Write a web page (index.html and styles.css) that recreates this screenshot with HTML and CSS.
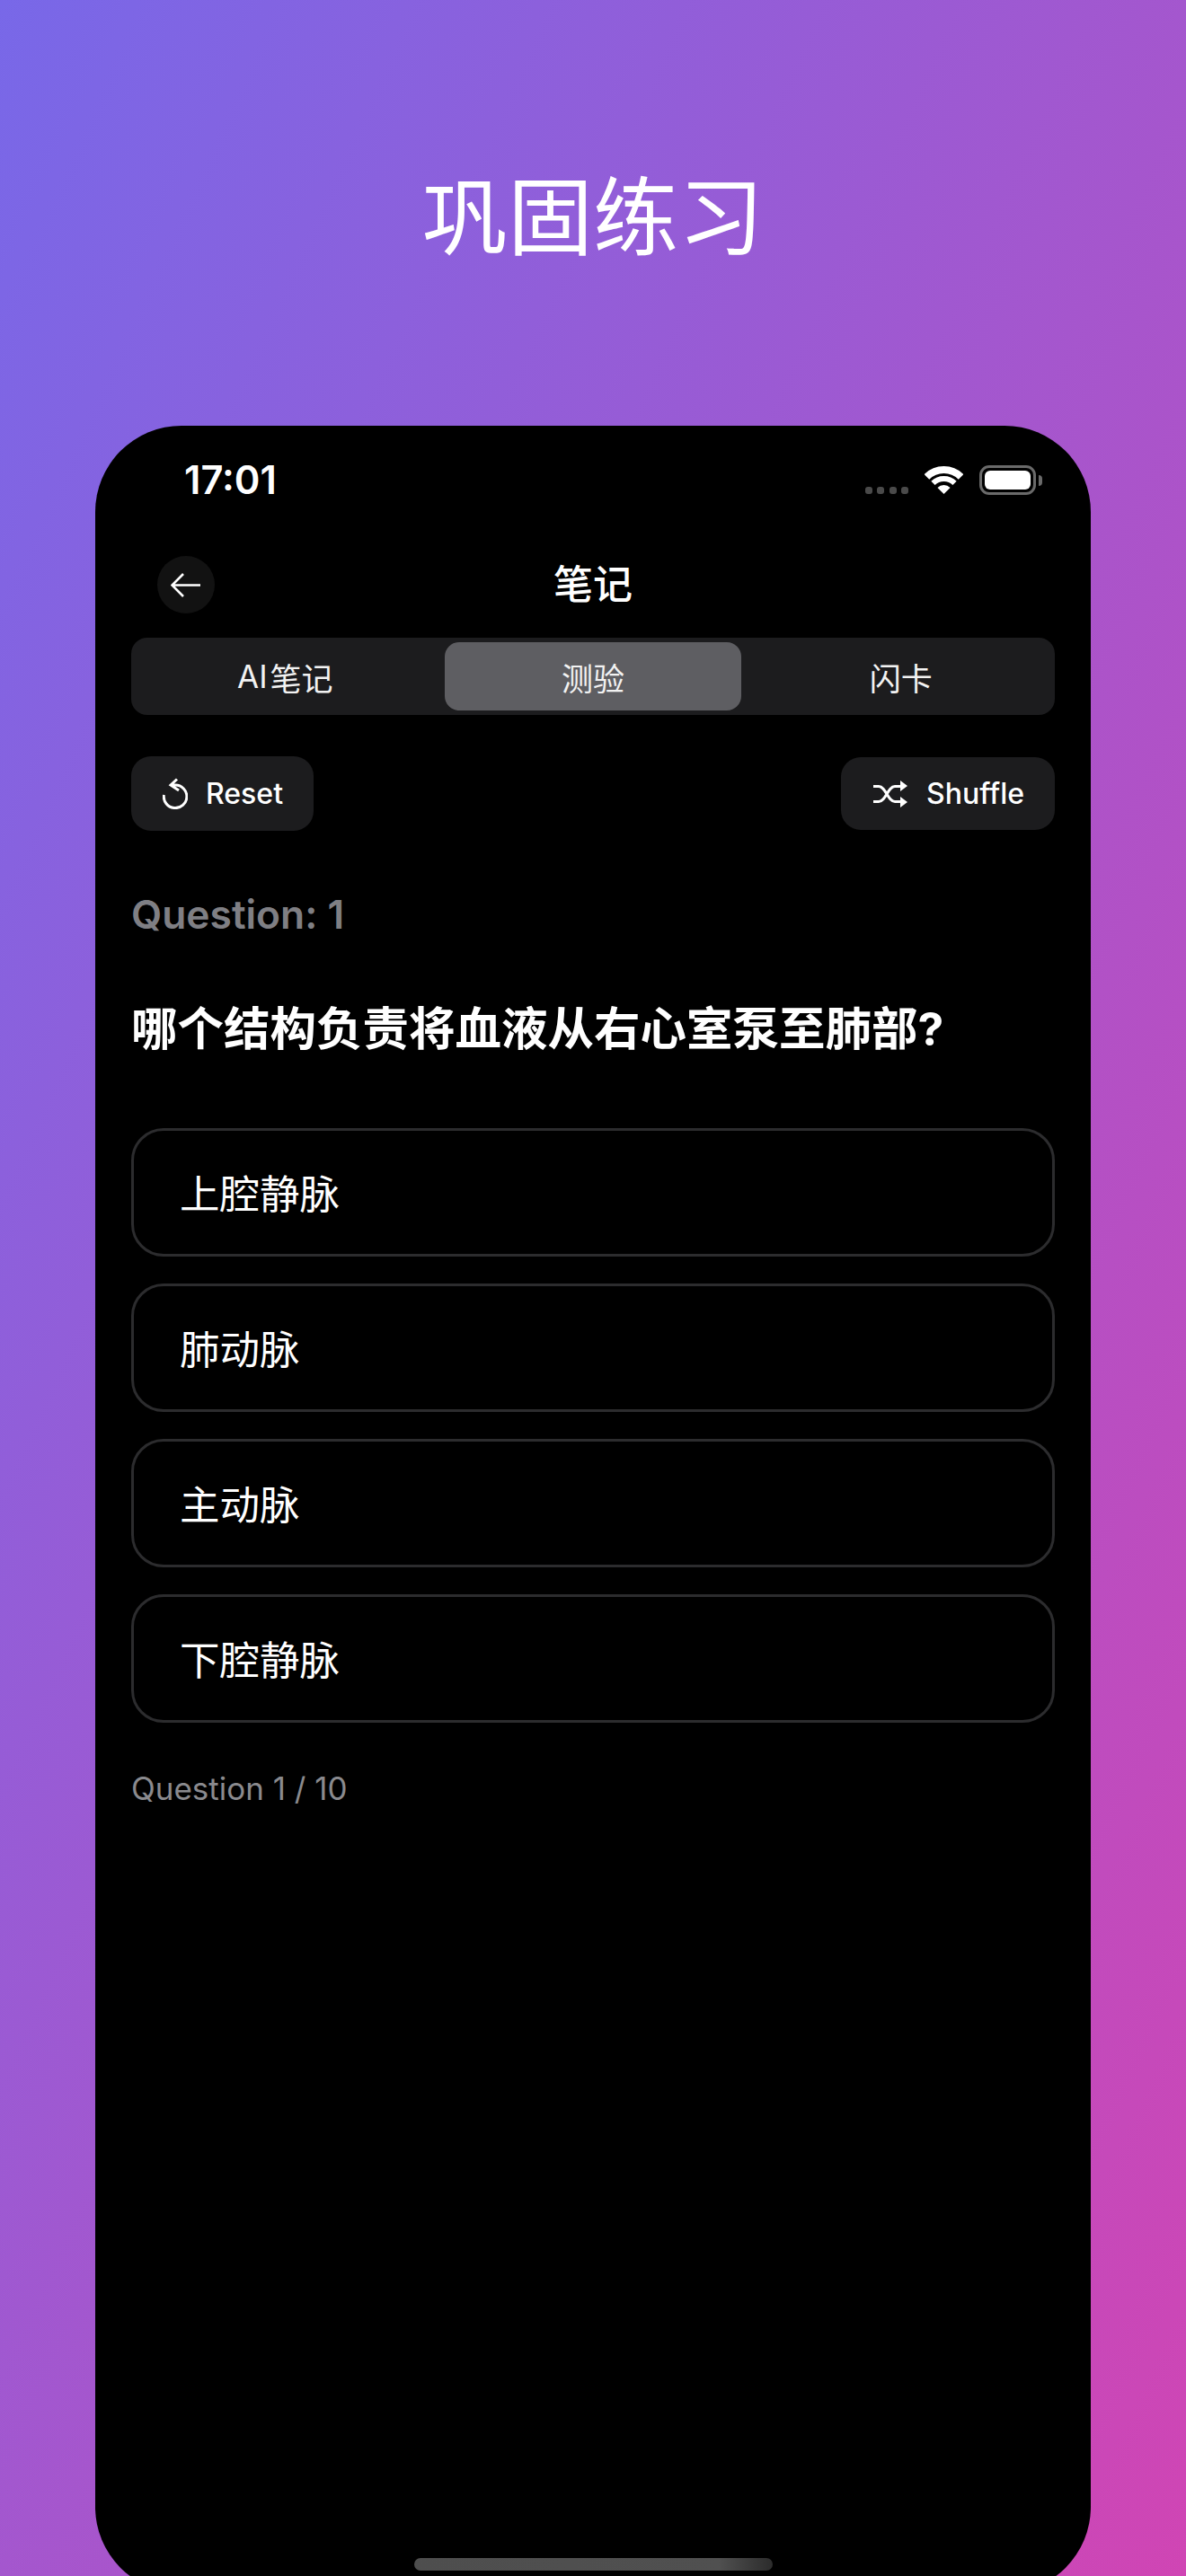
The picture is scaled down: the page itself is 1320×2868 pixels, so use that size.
FILE: index.html
```html
<!DOCTYPE html>
<html lang="zh">
<head>
<meta charset="utf-8">
<title>巩固练习</title>
<link rel="stylesheet" href="styles.css">
</head>
<body>
<h1 class="hero">巩固练习</h1>
<main class="phone">
  <div class="status">
    <span class="time">17:01</span>
    <div class="status-icons">
      <div class="signal"><i></i><i></i><i></i><i></i></div>
      <svg class="wifi" viewBox="0 0 43 33" width="43" height="33"><path d="M21.5 32L14.43 24.93A10 10 0 0 1 28.57 24.93Z" fill="#fff"/><path d="M9.48 19.98A17 17 0 0 1 33.52 19.98" fill="none" stroke="#fff" stroke-width="6"/><path d="M2.41 12.91A27 27 0 0 1 40.59 12.91" fill="none" stroke="#fff" stroke-width="8"/></svg>
      <div class="battery"><div class="battery-fill"></div></div>
      <div class="battery-nub"></div>
    </div>
  </div>
  <header class="nav">
    <button class="back" aria-label="Back"><svg viewBox="0 0 34 27" width="34" height="27"><path d="M33 13.5H2M14 1L1.5 13.5L14 26" fill="none" stroke="#fff" stroke-width="2.6"/></svg></button>
    <div class="nav-title">笔记</div>
  </header>
  <div class="content">
    <div class="tabs">
      <div class="tab"><span class="tab-latin">AI</span>笔记</div>
      <div class="tab tab-active">测验</div>
      <div class="tab">闪卡</div>
    </div>
    <div class="actions">
      <button class="action action-reset">
        <svg viewBox="0 0 28 35" width="28" height="35"><path d="M9 8H14A12.8 12.8 0 1 1 1.4 19M16 1.5L9 8L18 14" fill="none" stroke="#fff" stroke-width="3"/></svg>
        <span>Reset</span>
      </button>
      <button class="action action-shuffle">
        <svg viewBox="0 0 38 30" width="38" height="30"><path d="M0 23.5H6C14 23.5 16 6.5 24 6.5H31M0 6.5H6C14 6.5 16 23.5 24 23.5H31" fill="none" stroke="#fff" stroke-width="3"/><path d="M30 0L38 6L30 12ZM30 18L38 24L30 30Z" fill="#fff"/></svg>
        <span>Shuffle</span>
      </button>
    </div>
    <div class="q-label">Question: 1</div>
    <h2 class="q-text">哪个结构负责将血液从右心室泵至肺部?</h2>
    <div class="options">
      <div class="option">上腔静脉</div>
      <div class="option">肺动脉</div>
      <div class="option">主动脉</div>
      <div class="option">下腔静脉</div>
    </div>
    <div class="progress">Question 1 / 10</div>
  </div>
  <div class="home-bar"></div>
</main>
</body>
</html>
```
FILE: styles.css
```css
* { box-sizing: border-box; }
html, body { margin: 0; padding: 0; }
body {
  width: 1320px;
  height: 2868px;
  overflow: hidden;
  background: linear-gradient(to bottom right, #7868e8, #d045b4);
  font-family: Inter, "Noto Sans CJK SC", sans-serif;
  color: #fff;
}
.hero {
  margin: 0;
  padding-top: 173px;
  height: 474px;
  text-align: center;
  font-size: 95px;
  line-height: 140px;
  font-weight: 400;
}
.phone {
  width: 1108px;
  height: 2413px;
  margin-left: 106px;
  background: #000;
  border-radius: 96px;
  display: flex;
  flex-direction: column;
}
.status {
  display: flex;
  justify-content: space-between;
  align-items: center;
  height: 40px;
  margin-top: 40px;
  padding: 0 54px 0 99px;
}
.time {
  font-size: 43.5px;
  font-weight: 600;
  line-height: 40px;
}
.status-icons { display: flex; align-items: flex-end; height: 33px; }
.signal { display: flex; gap: 5.5px; margin-right: 18px; padding-bottom: 1px; }
.signal i { display: block; width: 8px; height: 8px; border-radius: 3px; background: #4a4a4a; }
.wifi { display: block; margin-right: 18px; }
.battery {
  width: 63px;
  height: 33px;
  border: 3px solid #6a6a6a;
  border-radius: 11px;
  padding: 3px;
}
.battery-fill { width: 100%; height: 100%; background: #fff; border-radius: 6px; }
.battery-nub {
  width: 4px;
  height: 12px;
  margin: 0 0 10px 3px;
  background: #6a6a6a;
  border-radius: 0 4px 4px 0;
}
.nav {
  display: grid;
  grid-template-columns: 64px 1fr 64px;
  align-items: center;
  height: 64px;
  margin-top: 65px;
  padding: 0 69px;
}
.back {
  width: 64px;
  height: 64px;
  padding: 0;
  border: 0;
  border-radius: 50%;
  background: #121212;
  display: flex;
  align-items: center;
  justify-content: center;
}
.nav-title { text-align: center; font-size: 44px; font-weight: 500; line-height: 60px; }
.content { padding: 0 40px; }
.tabs {
  display: grid;
  grid-template-columns: repeat(3, 1fr);
  height: 86px;
  margin-top: 27px;
  background: #1c1c1e;
  border-radius: 18px;
}
.tab {
  display: flex;
  align-items: center;
  justify-content: center;
  margin: 5px 6px;
  border-radius: 16px;
  font-size: 35px;
  color: #f2f2f2;
}
.tab-latin { margin-right: 3px; }
.tab-active { background: #5e5e62; }
.actions {
  display: flex;
  justify-content: space-between;
  align-items: center;
  height: 83px;
  margin-top: 46px;
}
.action {
  display: flex;
  align-items: center;
  border: 0;
  background: #1c1c1e;
  color: #fff;
  font-family: inherit;
  font-size: 32px;
  font-weight: 500;
  border-radius: 22px;
}
.action-reset { height: 83px; width: 203px; padding: 0 0 0 35px; gap: 20px; }
.action-shuffle { height: 81px; width: 238px; padding: 0 0 0 36px; gap: 21px; }
.action svg { flex: none; display: block; }
.q-label {
  margin-top: 63px;
  font-size: 44.3px;
  line-height: 60px;
  font-weight: 600;
  color: #7f7f84;
}
.q-text {
  margin: 65px 0 0;
  font-size: 51.5px;
  line-height: 64px;
  font-weight: 700;
}
.options {
  display: flex;
  flex-direction: column;
  gap: 30px;
  margin-top: 79px;
}
.option {
  display: flex;
  align-items: center;
  height: 143px;
  padding: 0 0 3px 51px;
  border: 3px solid #2c2c2e;
  border-radius: 36px;
  font-size: 44.5px;
}
.progress {
  margin-top: 51px;
  font-size: 35px;
  line-height: 44px;
  color: #8a8a8e;
}
.home-bar {
  width: 399px;
  height: 14px;
  margin: auto 0 25px 355px;
  border-radius: 7px;
  background: linear-gradient(to right, #4e4e4e 0%, #505050 85%, #2c2c2c 100%);
}
```
